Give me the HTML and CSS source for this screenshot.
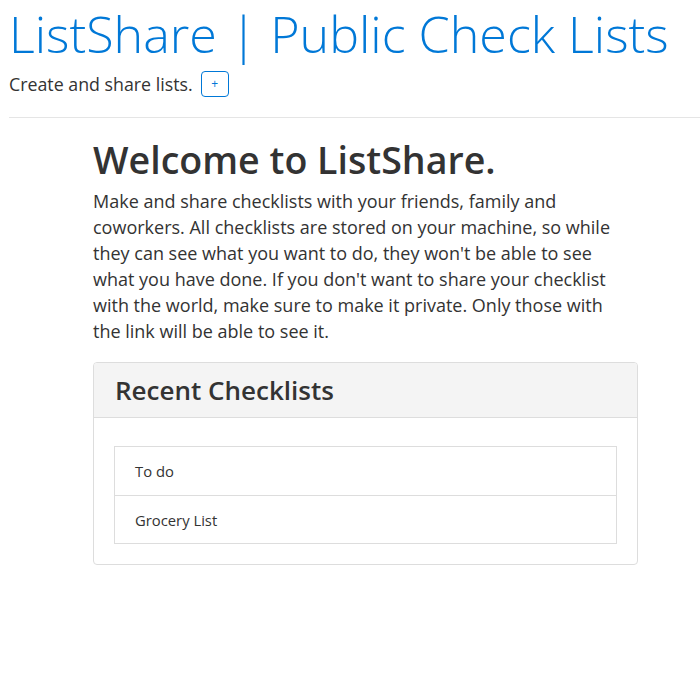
FILE: index.html
```html
<!DOCTYPE html>
<html>
<head>
<meta charset="utf-8">
<link rel="stylesheet" href="styles.css">
</head>
<body>
<header class="top">
  <h1 class="brand">ListShare | Public Check Lists</h1>
  <div class="tagline">
    <span>Create and share lists.</span>
    <button class="add-btn">+</button>
  </div>
</header>
<hr class="divider">
<main class="main">
  <h2 class="welcome">Welcome to ListShare.</h2>
  <p class="intro">Make and share checklists with your friends, family and coworkers. All checklists are stored on your machine, so while they can see what you want to do, they won't be able to see what you have done. If you don't want to share your checklist with the world, make sure to make it private. Only those with the link will be able to see it.</p>
  <section class="card">
    <div class="card-header"><h3 class="card-title">Recent Checklists</h3></div>
    <div class="card-body">
      <ul class="list">
        <li class="list-item">To do</li>
        <li class="list-item">Grocery List</li>
      </ul>
    </div>
  </section>
</main>
</body>
</html>
```
FILE: styles.css
```css
* { box-sizing: border-box; }
body {
  margin: 0;
  font-family: "Open Sans", "Noto Sans", sans-serif;
  color: #333;
  background: #fff;
}
.top { padding: 0 0 0 9px; }
.brand {
  margin: 0;
  font-weight: 300;
  font-size: 50.2px;
  line-height: 68px;
  color: #0078d7;
}
.tagline {
  display: flex;
  align-items: center;
  gap: 8px;
  margin-top: 3px;
  font-size: 17.8px;
}
.add-btn {
  width: 28px;
  height: 26px;
  padding: 0;
  border: 1px solid #0078d7;
  border-radius: 4px;
  background: #fff;
  color: #0078d7;
  font-size: 12px;
  font-family: inherit;
  line-height: 1;
}
.divider {
  margin: 20px 0 0 9px;
  border: 0;
  border-top: 1px solid #e5e5e5;
}
.main {
  width: 545px;
  margin-left: 93px;
  padding-top: 16px;
}
.welcome {
  margin: 0;
  font-size: 37.6px;
  font-weight: 600;
  line-height: 52px;
}
.intro {
  max-width: 528px;
  margin: 2px 0 18px;
  font-size: 18px;
  line-height: 26px;
}
.card {
  border: 1px solid #ddd;
  border-radius: 4px;
  overflow: hidden;
}
.card-header {
  background: #f4f4f4;
  border-bottom: 1px solid #ddd;
  padding: 0 21px;
  height: 55px;
  display: flex;
  align-items: center;
}
.card-title {
  margin: 0;
  font-size: 26px;
  font-weight: 600;
}
.card-body { padding: 28px 20px 20px; }
.list {
  list-style: none;
  margin: 0;
  padding: 0;
  border: 1px solid #ddd;
}
.list-item {
  height: 48px;
  display: flex;
  align-items: center;
  padding: 0 20px;
  font-size: 14.8px;
}
.list-item + .list-item { border-top: 1px solid #ddd; }
```
